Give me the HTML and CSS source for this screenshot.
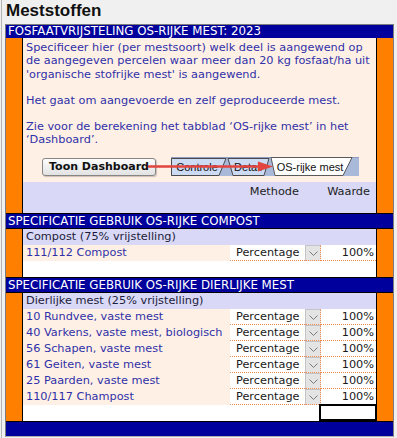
FILE: index.html
```html
<!DOCTYPE html>
<html lang="nl">
<head>
  <meta charset="UTF-8">
  <meta name="viewport" content="width=device-width, initial-scale=1.0">
  <title>Meststoffen</title>
  <link rel="stylesheet" href="styles.css">
</head>
<body>
  <div class="page">
    <h1>Meststoffen</h1>

    <div class="sheet">
      <div class="band">FOSFAATVRIJSTELING OS-RIJKE MEST: 2023</div>

      <!-- Uitleg en knop naar het dashboard -->
      <div class="block">
        <div class="gutter"></div>
        <div class="content">
          <div class="intro">
            <p>Specificeer hier (per mestsoort) welk deel is aangewend op<br>de aangegeven percelen waar meer dan 20 kg fosfaat/ha uit<br>'organische stofrijke mest' is aangewend.</p>
            <p>Het gaat om aangevoerde en zelf geproduceerde mest.</p>
            <p>Zie voor de berekening het tabblad ‘OS-rijke mest’ in het<br>‘Dashboard’.</p>
            <div class="actions">
              <button class="btn" type="button">Toon Dashboard</button>
              <svg class="tabs" width="188" height="19" viewBox="0 0 188 19">
                <rect x="0" y="0" width="188" height="19" fill="#a9b9da"/>
                <line x1="0" y1="0.5" x2="188" y2="0.5" stroke="#8d9cc0"/>
                <polygon points="0.5,1.5 55,1.5 48,18.5 0.5,18.5" fill="#ccdaf3" stroke="#4a4a4a"/>
                <polygon points="57,1.5 98,1.5 93,18.5 62,18.5" fill="#ccdaf3" stroke="#4a4a4a"/>
                <polygon points="100,0.5 181,0.5 172,18.5 104,18.5" fill="#ffffff" stroke="#5a5a5a"/>
                <text x="26" y="14" text-anchor="middle">Controle</text>
                <text x="77" y="14" text-anchor="middle">Detail</text>
                <text x="139" y="14" text-anchor="middle">OS-rijke mest</text>
              </svg>
              <svg class="arrow" width="128" height="11" viewBox="0 0 128 11">
                <line x1="0" y1="5.5" x2="114" y2="5.5" stroke="#e2453f" stroke-width="2.5"/>
                <polygon points="110,0.5 125,5.5 110,10.5" fill="#e2453f"/>
              </svg>
            </div>
          </div>
          <div class="row colhead">
            <span></span>
            <span class="method">Methode</span>
            <span></span>
            <span class="value">Waarde</span>
          </div>
          <div class="lav-empty"></div>
        </div>
        <div class="gutter right"></div>
      </div>

      <div class="band section">SPECIFICATIE GEBRUIK OS-RIJKE COMPOST</div>

      <div class="block">
        <div class="gutter"></div>
        <div class="content">
          <div class="group">Compost (75% vrijstelling)</div>
          <div class="row">
            <span class="label">111/112 Compost</span>
            <span class="method">Percentage</span>
            <span class="pick"><svg width="9" height="5" viewBox="0 0 9 5"><polyline points="0.5,0.5 4.5,4.5 8.5,0.5" fill="none" stroke="#7a7a7a"/></svg></span>
            <span class="value">100%</span>
          </div>
          <div class="blank"></div>
        </div>
        <div class="gutter right"></div>
      </div>

      <div class="band section">SPECIFICATIE GEBRUIK OS-RIJKE DIERLIJKE MEST</div>

      <div class="block">
        <div class="gutter"></div>
        <div class="content">
          <div class="group">Dierlijke mest (25% vrijstelling)</div>
          <div class="row">
            <span class="label">10 Rundvee, vaste mest</span>
            <span class="method">Percentage</span>
            <span class="pick"><svg width="9" height="5" viewBox="0 0 9 5"><polyline points="0.5,0.5 4.5,4.5 8.5,0.5" fill="none" stroke="#7a7a7a"/></svg></span>
            <span class="value">100%</span>
          </div>
          <div class="row">
            <span class="label">40 Varkens, vaste mest, biologisch</span>
            <span class="method">Percentage</span>
            <span class="pick"><svg width="9" height="5" viewBox="0 0 9 5"><polyline points="0.5,0.5 4.5,4.5 8.5,0.5" fill="none" stroke="#7a7a7a"/></svg></span>
            <span class="value">100%</span>
          </div>
          <div class="row">
            <span class="label">56 Schapen, vaste mest</span>
            <span class="method">Percentage</span>
            <span class="pick"><svg width="9" height="5" viewBox="0 0 9 5"><polyline points="0.5,0.5 4.5,4.5 8.5,0.5" fill="none" stroke="#7a7a7a"/></svg></span>
            <span class="value">100%</span>
          </div>
          <div class="row">
            <span class="label">61 Geiten, vaste mest</span>
            <span class="method">Percentage</span>
            <span class="pick"><svg width="9" height="5" viewBox="0 0 9 5"><polyline points="0.5,0.5 4.5,4.5 8.5,0.5" fill="none" stroke="#7a7a7a"/></svg></span>
            <span class="value">100%</span>
          </div>
          <div class="row">
            <span class="label">25 Paarden, vaste mest</span>
            <span class="method">Percentage</span>
            <span class="pick"><svg width="9" height="5" viewBox="0 0 9 5"><polyline points="0.5,0.5 4.5,4.5 8.5,0.5" fill="none" stroke="#7a7a7a"/></svg></span>
            <span class="value">100%</span>
          </div>
          <div class="row">
            <span class="label">110/117 Champost</span>
            <span class="method">Percentage</span>
            <span class="pick"><svg width="9" height="5" viewBox="0 0 9 5"><polyline points="0.5,0.5 4.5,4.5 8.5,0.5" fill="none" stroke="#7a7a7a"/></svg></span>
            <span class="value">100%</span>
          </div>
          <div class="blank row">
            <span></span><span></span><span></span>
            <span class="selected"></span>
          </div>
        </div>
        <div class="gutter right"></div>
      </div>

      <div class="band footer"></div>
    </div>
  </div>
</body>
</html>
```

FILE: styles.css
```css
/* Basis */
* {
  box-sizing: border-box;
  margin: 0;
  padding: 0;
}
body {
  background: #f0f0f0;
  font-family: 'DejaVu Sans', sans-serif;
  font-size: 11.3px;
  color: #1a1a1a;
}
.page {
  margin-left: 1px;
  border-left: 1px solid #b4b4b4;
  min-height: 438px;
}
h1 {
  font-family: 'Liberation Sans', Arial, sans-serif;
  font-size: 17px;
  font-weight: bold;
  color: #111;
  height: 24px;
  line-height: 22px;
  padding-left: 4px;
}
/* Werkblad */
.sheet {
  margin-left: 3px;
  width: 389px;
  border: 1px solid #7c7c7c;
  border-bottom-color: #b0b0b0;
}
.band {
  background: #00009c;
  color: #fff;
  font-size: 11.8px;
  height: 13px;
  line-height: 13px;
  padding-left: 2px;
  white-space: nowrap;
}
.band.section {
  height: 16px;
  line-height: 14px;
  border-top: 1px solid #000;
  border-bottom: 1px solid #000;
}
.band.footer {
  height: 15px;
  border-top: 1px solid #000;
}
.block {
  display: flex;
}
.gutter {
  width: 17px;
  background: #ff8000;
  border-right: 1px solid #000;
}
.gutter.right {
  border-right: none;
  border-left: 1px solid #000;
}
.content {
  flex: 1;
  background: #fff;
}
/* Uitleg */
.intro {
  background: #fff0e5;
  color: #3030a8;
  line-height: 13.3px;
  padding: 3px 0 6px 3px;
  white-space: nowrap;
}
.intro p {
  margin-bottom: 13px;
}
.intro p:last-of-type {
  margin-bottom: 0;
}
.actions {
  position: relative;
  display: flex;
  align-items: center;
  gap: 15px;
  margin: 10px 0 0 16px;
  height: 19px;
}
.btn {
  width: 114px;
  height: 18px;
  margin-top: 1px;
  font-family: 'DejaVu Sans', sans-serif;
  font-size: 11px;
  font-weight: bold;
  color: #111;
  background: linear-gradient(#fdfdfd, #e2e2e2);
  border: 1px solid #858585;
  border-radius: 3px;
  box-shadow: 1px 1px 1px rgba(0,0,0,0.2);
}
.tabs text {
  font-family: 'Liberation Sans', Arial, sans-serif;
  font-size: 11px;
  fill: #111;
}
.arrow {
  position: absolute;
  left: 106px;
  top: 4px;
}
/* Tabelregels */
.row {
  display: grid;
  grid-template-columns: 207px 75px 16px 1fr;
  height: 16px;
  line-height: 15px;
  background: #fff0e5;
  white-space: nowrap;
}
.row .label {
  color: #3030a8;
  padding-left: 3px;
}
.row .method,
.row .value {
  background: #fff;
  border-bottom: 1px dotted #f08a50;
}
.row .method {
  padding-left: 6px;
}
.row .value {
  text-align: right;
  padding-right: 2px;
}
.row .pick {
  display: flex;
  align-items: center;
  justify-content: center;
  padding-top: 2px;
  background: #e4e4e4;
  border: 1px solid #c4c4c4;
  border-right: 1px dotted #f08a50;
  border-bottom: 1px dotted #f08a50;
}
.colhead {
  background: #d9d9f7;
}
.colhead .method,
.colhead .value {
  background: none;
  border: none;
  color: #222;
  padding: 2px 6px 0 0;
  text-align: right;
}
.lav-empty {
  height: 15px;
  background: #d9d9f7;
}
.group {
  height: 16px;
  line-height: 16px;
  padding-left: 3px;
  background: #d9d9f7;
  color: #1c1c3a;
}
.blank {
  height: 16px;
  background: #fff;
}
.blank.row span {
  background: none;
  border: none;
}
.blank.row .selected {
  border: 2px solid #000;
  margin: -1px -1px 0 -2px;
  height: 17px;
}
```
